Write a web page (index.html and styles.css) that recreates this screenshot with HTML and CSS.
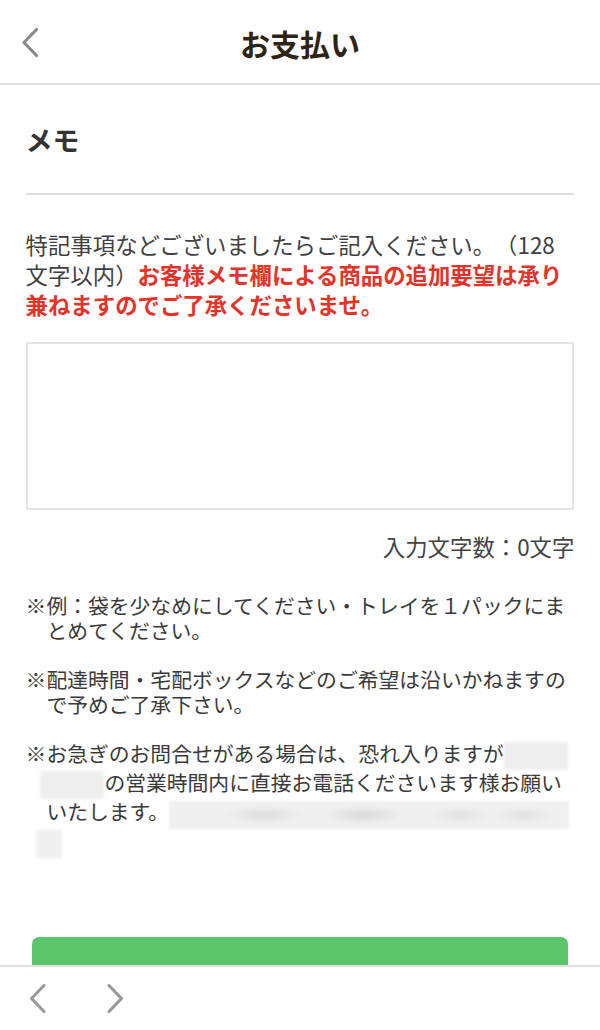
FILE: index.html
```html
<!DOCTYPE html>
<html lang="ja">
<head>
<meta charset="utf-8">
<title>お支払い</title>
<link rel="stylesheet" href="styles.css">
</head>
<body>
<header class="topbar">
  <svg class="back" width="18" height="31" viewBox="0 0 18 31"><path d="M15.5 2.5 L3 15.5 L15.5 28.5" fill="none" stroke="#8a8a8a" stroke-width="3.2" stroke-linecap="round" stroke-linejoin="round"/></svg>
  <h1 class="title">お支払い</h1>
</header>
<main class="content">
  <h2 class="heading">メモ</h2>
  <p class="lead">特記事項などございましたらご記入ください。（128文字以内）<strong class="warn">お客様メモ欄による商品の追加要望は承り兼ねますのでご了承くださいませ。</strong></p>
  <textarea class="memo"></textarea>
  <p class="count">入力文字数：0文字</p>
  <div class="notes">
    <p class="note">※例：袋を少なめにしてください・トレイを１パックにまとめてください。</p>
    <p class="note">※配達時間・宅配ボックスなどのご希望は沿いかねますので予めご了承下さい。</p>
    <p class="note">※お急ぎのお問合せがある場合は、恐れ入りますが<span class="redact r1"></span><span class="redact r2"></span>の営業時間内に直接お電話くださいます様お願いいたします。<span class="redact r3"></span><span class="redact r4"></span></p>
  </div>
  <div class="next-btn"></div>
</main>
<nav class="toolbar">
  <svg class="nav-ic" width="18" height="31" viewBox="0 0 18 31"><path d="M15 2.5 L2.5 15.5 L15 28.5" fill="none" stroke="#9a9a9a" stroke-width="3.2" stroke-linecap="round" stroke-linejoin="round"/></svg>
  <svg class="nav-ic" width="18" height="31" viewBox="0 0 18 31"><path d="M3 2.5 L15.5 15.5 L3 28.5" fill="none" stroke="#9a9a9a" stroke-width="3.2" stroke-linecap="round" stroke-linejoin="round"/></svg>
</nav>
</body>
</html>
```

FILE: styles.css
```css
* { box-sizing: border-box; }
html, body { margin: 0; padding: 0; background: #fff; }
body {
  width: 600px;
  font-family: "Noto Sans CJK JP", "Noto Sans", sans-serif;
  color: #3a3a3a;
  text-spacing-trim: space-all;
}
.topbar {
  height: 85px;
  border-bottom: 2px solid #e2e2e2;
  display: flex;
  align-items: center;
  justify-content: center;
  position: relative;
}
.back {
  position: absolute;
  left: 21px;
  top: 27px;
}
.title {
  margin: 0;
  font-size: 30px;
  font-weight: 700;
  color: #2e2414;
  line-height: 1;
  padding-top: 2px;
}
.content {
  padding: 0 25.6px;
}
.heading {
  margin: 0;
  padding: 37px 0 35px;
  font-size: 27px;
  line-height: 36px;
  font-weight: 700;
  color: #333;
  border-bottom: 2px solid #dedede;
}
.lead {
  margin: 34px 0 0;
  font-size: 22.4px;
  line-height: 30px;
  color: #404040;
}
.warn {
  color: #e5332a;
  font-weight: 700;
}
.memo {
  display: block;
  width: 100%;
  height: 168px;
  margin-top: 23px;
  border: 2px solid #e4e4e4;
  border-radius: 0;
  resize: none;
  outline: none;
  background: #fff;
  font: inherit;
}
.count {
  margin: 21px 0 0;
  text-align: right;
  font-size: 22.4px;
  line-height: 30px;
  color: #444;
}
.notes {
  margin-top: 32px;
  display: flex;
  flex-direction: column;
  gap: 23px;
}
.note {
  margin: 0;
  font-size: 20.8px;
  line-height: 25.4px;
  padding-left: 1em;
  text-indent: -1em;
  color: #3a3a3a;
}
.redact {
  display: inline-block;
  vertical-align: middle;
  height: 28px;
  background: #efefef;
  filter: blur(1.5px);
  text-indent: 0;
}
.r1 { width: 64px; }
.r2 { width: 64px; margin-left: -6px; }
.r3 {
  width: 400px;
  background:
    radial-gradient(ellipse 40px 9px at 95px 14px, #dcdcdc, rgba(220,220,220,0)),
    radial-gradient(ellipse 40px 9px at 195px 14px, #d8d8d8, rgba(220,220,220,0)),
    radial-gradient(ellipse 30px 8px at 290px 14px, #e0e0e0, rgba(220,220,220,0)),
    radial-gradient(ellipse 30px 8px at 355px 14px, #e0e0e0, rgba(220,220,220,0)),
    #f0f0f0;
}
.r4 { width: 26px; margin-left: -10px; }
.next-btn {
  margin: 79px 6px 0;
  height: 64px;
  background: #5cc46b;
  border-radius: 7px;
}
.toolbar {
  position: fixed;
  left: 0;
  bottom: 0;
  width: 600px;
  height: 65px;
  background: #fff;
  border-top: 2px solid #e0e0e0;
  display: flex;
  align-items: center;
  gap: 59px;
  padding-left: 29px;
}
```
